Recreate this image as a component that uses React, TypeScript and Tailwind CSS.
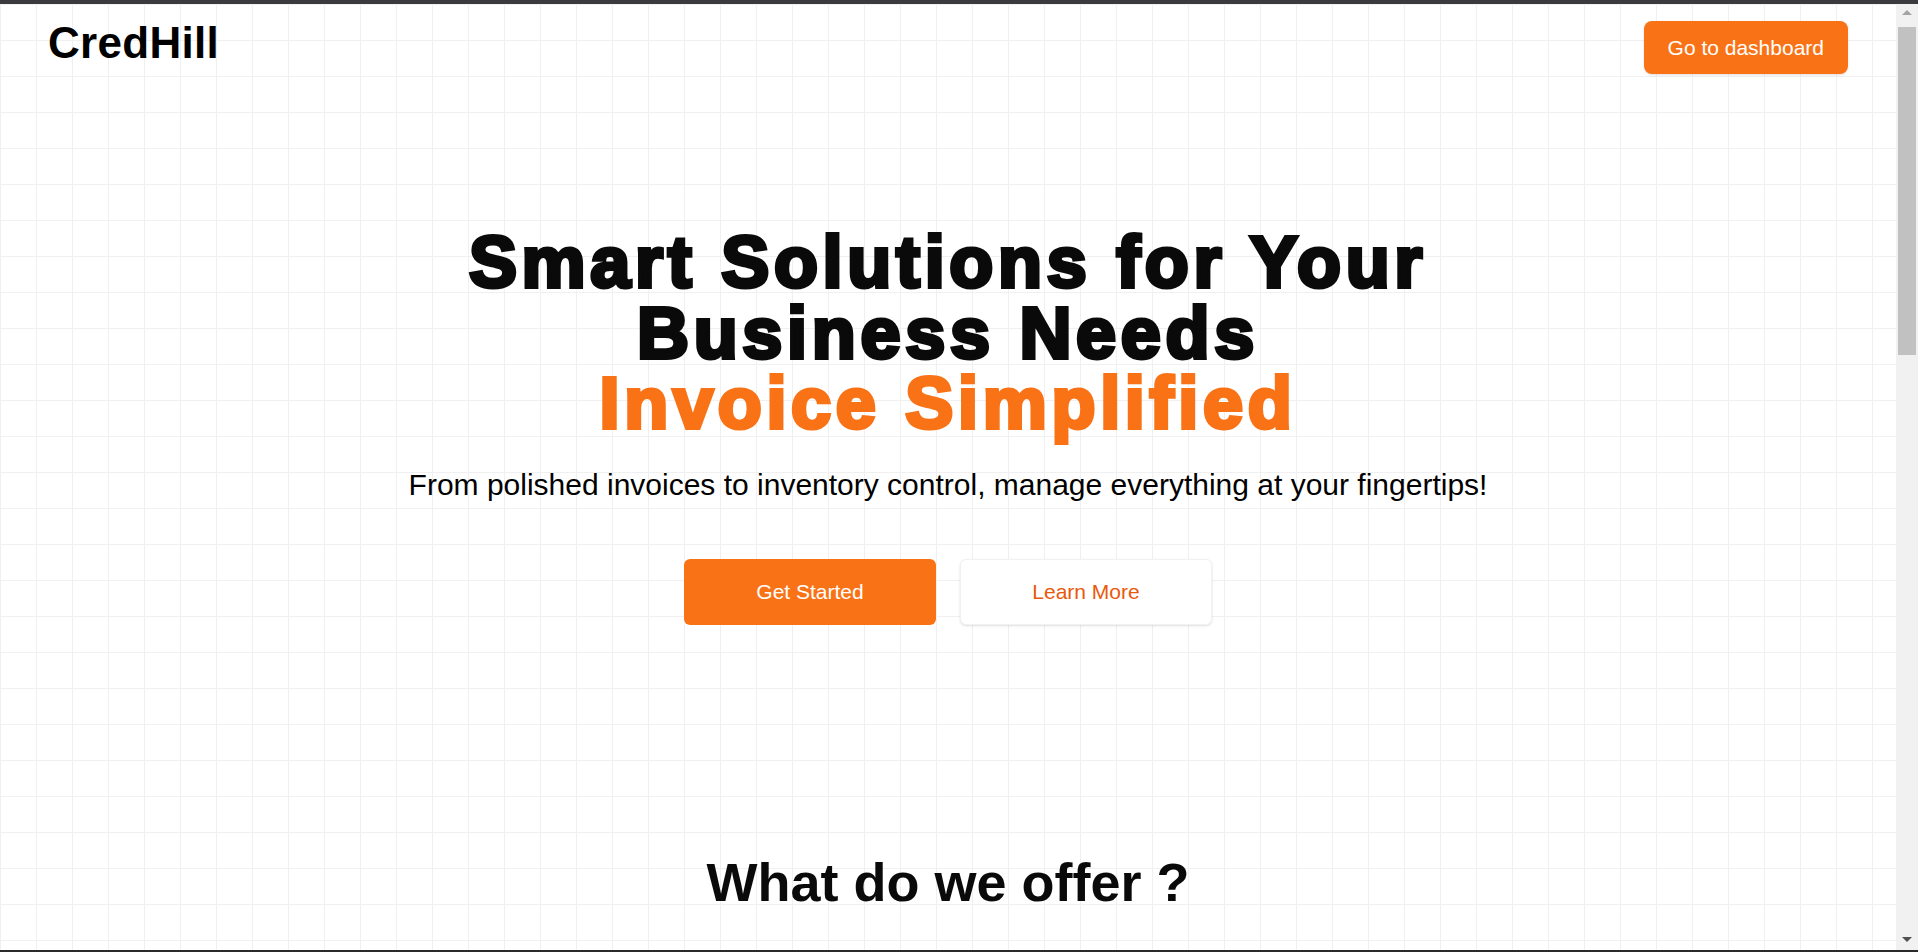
function Scrollbar() {
  return (
    <div className="flex w-[22px] shrink-0 flex-col items-center bg-[#f1f1f1]">
      <svg width="10" height="5" viewBox="0 0 10 5" className="mt-[6px]">
        <path d="M0 5 L5 0 L10 5 Z" fill="#a3a3a3" />
      </svg>
      <div className="mt-[12px] h-[328px] w-[18px] bg-[#c1c1c1]" />
      <div className="flex-1" />
      <svg width="10" height="5" viewBox="0 0 10 5" className="mb-[8px]">
        <path d="M0 0 L10 0 L5 5 Z" fill="#505050" />
      </svg>
    </div>
  );
}

export default function App() {
  return (
    <div className="flex h-[952px] w-full flex-col overflow-hidden bg-white font-['Liberation_Sans',Arial,sans-serif]">
      <div className="h-1 shrink-0 bg-[#3b3b3d]" />

      <div className="flex min-h-0 flex-1">
        <main className="min-w-0 flex-1 overflow-hidden bg-white [background-image:linear-gradient(to_right,#f0f0f0_1px,transparent_1px),linear-gradient(to_bottom,#f0f0f0_1px,transparent_1px)] [background-size:36px_36px]">
          <header className="flex items-start justify-between pl-12 pr-12 pt-[17px]">
            <span className="text-[44px] font-bold leading-none tracking-[0.3px] text-black">CredHill</span>
            <button
              type="button"
              className="flex h-[53px] items-center rounded-lg bg-[#f97316] px-6 text-[21px] text-white shadow-sm"
            >
              Go to dashboard
            </button>
          </header>

          <section className="flex flex-col items-center text-center">
            <h1 className="mt-[153px] text-[72px] font-bold leading-[70.5px] tracking-[4.7px] text-[#0a0a0a] [-webkit-text-stroke-width:4px]">
              Smart Solutions for Your
              <br />
              Business Needs
              <br />
              <span className="text-[#f97316]">Invoice Simplified</span>
            </h1>

            <p className="mt-[28px] text-[30px] leading-[36px] text-black">
              From polished invoices to inventory control, manage everything at your fingertips!
            </p>

            <div className="mt-[56px] flex gap-6">
              <button
                type="button"
                className="flex h-[66px] w-[252px] items-center justify-center rounded-md bg-[#f97316] text-[21px] text-white"
              >
                Get Started
              </button>
              <button
                type="button"
                className="flex h-[66px] w-[252px] items-center justify-center rounded-md border border-[#f1f1f1] bg-white text-[21px] text-[#ea580c] shadow-sm"
              >
                Learn More
              </button>
            </div>
          </section>

          <section className="mt-[230px] flex flex-col items-center">
            <h2 className="text-[54px] font-bold leading-none text-[#0a0a0a]">What do we offer ?</h2>
          </section>
        </main>

        <Scrollbar />
      </div>

      <div className="h-[2px] shrink-0 bg-[#2a2a2a]" />
    </div>
  );
}
